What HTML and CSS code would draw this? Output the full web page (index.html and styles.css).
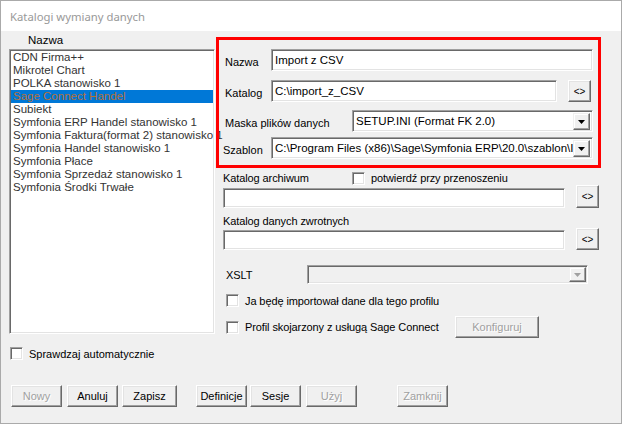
FILE: index.html
```html
<!DOCTYPE html>
<html lang="pl">
<head>
	<meta charset="UTF-8" />
	<title>Katalogi wymiany danych</title>
	<link rel="stylesheet" href="styles.css">
</head>
<body>
	<div class="window">
		<div class="titlebar">Katalogi wymiany danych</div>

		<div class="main">
			<!-- lista profili -->
			<div class="left">
				<div class="left-head">Nazwa</div>
				<div class="list sunken">
					<div class="item">CDN Firma++</div>
					<div class="item">Mikrotel Chart</div>
					<div class="item">POLKA stanowisko 1</div>
					<div class="item selected">Sage Connect Handel</div>
					<div class="item">Subiekt</div>
					<div class="item">Symfonia ERP Handel stanowisko 1</div>
					<div class="item">Symfonia Faktura(format 2) stanowisko 1</div>
					<div class="item">Symfonia Handel stanowisko 1</div>
					<div class="item">Symfonia Płace</div>
					<div class="item">Symfonia Sprzedaż stanowisko 1</div>
					<div class="item">Symfonia Środki Trwałe</div>
				</div>
			</div>

			<div class="right">
				<div class="redbox">
					<div class="row r1">
						<span class="lbl">Nazwa</span>
						<div class="field sunken">Import z CSV</div>
					</div>
					<div class="row r2">
						<span class="lbl">Katalog</span>
						<div class="field sunken">C:\import_z_CSV</div>
						<button class="btn browse">&lt;&gt;</button>
					</div>
					<div class="row r3">
						<span class="lbl wide">Maska plików danych</span>
						<div class="field combo sunken">
							<span class="combo-text">SETUP.INI (Format FK 2.0)</span>
							<span class="drop"><svg width="7" height="4" viewBox="0 0 7 4"><path d="M0 0h7L3.5 4z" fill="#000"/></svg></span>
						</div>
					</div>
					<div class="row r4">
						<span class="lbl shift">Szablon</span>
						<div class="field combo sunken">
							<span class="combo-text">C:\Program Files (x86)\Sage\Symfonia ERP\20.0\szablon\IMP2.INI</span>
							<span class="drop"><svg width="7" height="4" viewBox="0 0 7 4"><path d="M0 0h7L3.5 4z" fill="#000"/></svg></span>
						</div>
					</div>
				</div>

				<div class="sec">
					<div class="cap-row">
						<span class="cap-lbl">Katalog archiwum</span>
						<span class="check sunken"></span>
						<span class="check-text">potwierdź przy przenoszeniu</span>
					</div>
					<div class="path-row">
						<div class="field sunken path"></div>
						<button class="btn browse">&lt;&gt;</button>
					</div>
					<div class="cap-row cap2">
						<span class="cap-lbl free">Katalog danych zwrotnych</span>
					</div>
					<div class="path-row pr2">
						<div class="field sunken path"></div>
						<button class="btn browse">&lt;&gt;</button>
					</div>

					<div class="xslt-row">
						<span class="xslt-lbl">XSLT</span>
						<div class="field combo sunken off">
							<span class="combo-text"></span>
							<span class="drop"><svg width="7" height="4" viewBox="0 0 7 4"><path d="M0 0h7L3.5 4z" fill="#a0a0a0"/></svg></span>
						</div>
					</div>

					<div class="opt-row">
						<span class="check sunken"></span>
						<span class="check-text">Ja będę importował dane dla tego profilu</span>
					</div>
					<div class="opt-row opt2">
						<span class="check sunken"></span>
						<span class="check-text fixed">Profil skojarzony z usługą Sage Connect</span>
						<button class="btn disabled konf">Konfiguruj</button>
					</div>
				</div>
			</div>
		</div>

		<div class="auto-row">
			<span class="check sunken"></span>
			<span class="check-text">Sprawdzaj automatycznie</span>
		</div>

		<div class="buttons">
			<button class="btn disabled b-nowy">Nowy</button>
			<button class="btn b-anuluj">Anuluj</button>
			<button class="btn b-zapisz">Zapisz</button>
			<button class="btn b-def">Definicje</button>
			<button class="btn b-sesje">Sesje</button>
			<button class="btn disabled b-uzyj">Użyj</button>
			<button class="btn disabled b-zamknij">Zamknij</button>
		</div>
	</div>
</body>
</html>
```

FILE: styles.css
```css
body {
	margin: 0;
	font-family: "Liberation Sans", Arial, sans-serif;
	font-size: 11px;
	color: #000;
}

.window {
	width: 622px;
	height: 424px;
	box-sizing: border-box;
	border: 1px solid #aaaaaa;
	background: #f0f0f0;
	overflow: hidden;
}

.titlebar {
	height: 30px;
	background: #ffffff;
	padding-left: 9px;
	line-height: 31px;
	font-family: "Noto Sans", sans-serif;
	font-size: 11.3px;
	color: #999999;
}

/* 3D borders like the classic controls */
.sunken {
	box-sizing: border-box;
	background: #ffffff;
	border: 1px solid;
	border-color: #a0a0a0 #ffffff #ffffff #a0a0a0;
	box-shadow: inset 1px 1px 0 #696969, inset -1px -1px 0 #e3e3e3;
}

.btn {
	box-sizing: border-box;
	height: 22px;
	padding: 0;
	margin: 0;
	background: #f0f0f0;
	font-family: "Liberation Sans", Arial, sans-serif;
	font-size: 11px;
	color: #000;
	border: 1px solid;
	border-color: #ffffff #696969 #696969 #ffffff;
	box-shadow: inset -1px -1px 0 #a0a0a0, inset 1px 1px 0 #e3e3e3;
}

.btn.disabled {
	color: #a0a0a0;
	text-shadow: 1px 1px 0 #ffffff;
}

.main {
	display: flex;
	padding-left: 8px;
}

.left {
	width: 206px;
}

.left-head {
	height: 18px;
	line-height: 19px;
	padding-left: 19px;
	font-size: 11.5px;
}

.list {
	height: 285px;
	padding: 1px;
	color: #333;
	font-size: 11.5px;
}

.item {
	height: 13px;
	line-height: 13px;
	padding-left: 2px;
	white-space: nowrap;
}

.item.selected {
	background: #0078d7;
	color: #b5703a;
}

.right {
	width: 385px;
	margin-left: 1px;
	margin-top: 6px;
}

.redbox {
	height: 131px;
	box-sizing: border-box;
	border: 3px solid #ff0000;
	padding: 9px 5px 0 6px;
}

.row {
	display: flex;
	align-items: center;
	height: 22px;
}

.r2 { margin-top: 9px; }
.r3 { margin-top: 8px; }
.r4 { margin-top: 5px; }

.lbl {
	width: 46px;
	flex: none;
	font-size: 11px;
	padding-top: 3px;
}

.lbl.wide { width: 127px; }
.lbl.shift { margin-left: -2px; width: 48px; }

.field {
	flex: 1;
	height: 22px;
	padding: 2px 3px;
	font-size: 11.5px;
	line-height: 16px;
	white-space: nowrap;
	overflow: hidden;
}

.browse {
	width: 23px;
	flex: none;
	margin-left: 11px;
	margin-right: 2px;
	font-size: 10px;
}

.combo {
	display: flex;
	padding: 2px 2px 2px 3px;
}

.combo-text {
	flex: 1;
	overflow: hidden;
	white-space: nowrap;
}

.drop {
	flex: none;
	width: 17px;
	height: 17px;
	box-sizing: border-box;
	background: #f0f0f0;
	border: 1px solid;
	border-color: #f0f0f0 #696969 #696969 #f0f0f0;
	box-shadow: inset -1px -1px 0 #a0a0a0, inset 1px 1px 0 #ffffff;
	display: flex;
	align-items: center;
	justify-content: center;
}

.combo.off {
	background: #f0f0f0;
}

.combo.off .drop {
	height: 15px;
}

.sec {
	padding-left: 7px;
	font-size: 11px;
	letter-spacing: -0.1px;
}

.cap-row {
	display: flex;
	align-items: center;
	height: 14px;
	margin-top: 3px;
}

.cap-row.cap2 { margin-top: 6px; }

.cap-lbl {
	width: 129px;
	flex: none;
	white-space: nowrap;
}

.cap-lbl.free { width: auto; }

.check {
	display: inline-block;
	width: 13px;
	height: 13px;
	flex: none;
}

.check-text {
	margin-left: 6px;
	white-space: nowrap;
}

.path-row {
	display: flex;
	align-items: flex-end;
	height: 23px;
}

.path-row.pr2 { height: 22px; }

.path {
	height: 20px;
	flex: 1;
}

.path-row .browse {
	height: 100%;
}

.xslt-row {
	display: flex;
	height: 19px;
	margin-top: 15px;
	align-items: center;
}

.xslt-lbl {
	width: 81px;
	padding-left: 3px;
}

.xslt-row .combo {
	flex: none;
	width: 281px;
	height: 19px;
	padding: 1px;
}

.opt-row {
	display: flex;
	align-items: center;
	height: 13px;
	margin-top: 10px;
	padding-left: 3px;
}

.opt-row.opt2 {
	height: 22px;
	margin-top: 9px;
}

.check-text.fixed {
	width: 210px;
}

.konf {
	width: 84px;
	height: 22px;
}

.auto-row {
	display: flex;
	align-items: center;
	margin-top: 9px;
	padding-left: 9px;
	height: 13px;
}

.buttons {
	display: flex;
	margin-top: 25px;
	padding-left: 10px;
}

.buttons .btn { width: 51px; }
.buttons .b-zapisz { width: 55px; }
.b-anuluj { margin-left: 5px; }
.b-zapisz { margin-left: 4px; }
.b-def { margin-left: 19px; }
.b-sesje { margin-left: 3px; }
.b-uzyj { margin-left: 5px; }
.b-zamknij { margin-left: 40px; }
```
